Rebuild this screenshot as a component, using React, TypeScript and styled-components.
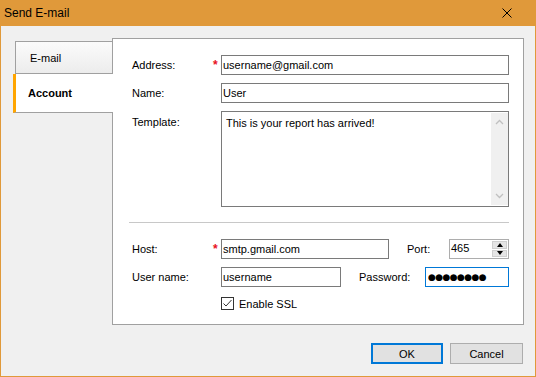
import React from "react";
import styled, { createGlobalStyle } from "styled-components";

const GlobalStyle = createGlobalStyle`
  html, body {
    margin: 0;
    padding: 0;
    background: #f0f0f0;
  }
  body {
    font-family: "Liberation Sans", Arial, sans-serif;
    font-size: 11px;
    color: #000;
  }
  * {
    box-sizing: border-box;
  }
`;

const Window = styled.div`
  width: 536px;
  height: 377px;
  display: flex;
  flex-direction: column;
  background: #f0f0f0;
  border: 1px solid #e0993a;
  border-top: none;
`;

const TitleBar = styled.div`
  height: 26px;
  flex: none;
  background: #e0993a;
  display: flex;
  align-items: center;
  justify-content: space-between;
  padding: 0 23px 0 3px;
  font-size: 12px;
`;

const Main = styled.div`
  display: flex;
  align-items: flex-start;
  padding: 12px 11px 0 12px;
`;

const TabColumn = styled.div`
  width: 100px;
  flex: none;
  margin-top: 3px;
  margin-right: -1px;
  position: relative;
  z-index: 1;
  display: flex;
  flex-direction: column;
`;

const Tab = styled.div<{ $active?: boolean }>`
  display: flex;
  align-items: center;
  ${(p) =>
    p.$active
      ? `
    height: 39px;
    background: #fff;
    border-left: 3px solid #ffa500;
    border-bottom: 1px solid #a0a0a0;
    padding-left: 12px;
    font-weight: bold;
  `
      : `
    height: 33px;
    margin: 0 1px 0 2px;
    background: linear-gradient(#fbfbfb, #ececec);
    border: 1px solid #a0a0a0;
    border-right: none;
    padding-left: 14px;
  `}
`;

const Panel = styled.div`
  flex: 1;
  height: 287px;
  background: #fff;
  border: 1px solid #a0a0a0;
  padding: 16px 14px 0 19px;
`;

const FieldGrid = styled.div`
  display: grid;
  grid-template-columns: 81px 8px 1fr;
  row-gap: 8px;
  align-items: center;
`;

const Label = styled.div<{ $top?: boolean; $w?: number; $ml?: number }>`
  line-height: 13px;
  white-space: nowrap;
  ${(p) => (p.$top ? "align-self: start; margin-top: 5px;" : "")}
  ${(p) => (p.$w ? `width: ${p.$w}px; flex: none;` : "")}
  ${(p) => (p.$ml ? `margin-left: ${p.$ml}px;` : "")}
`;

const Required = styled.span<{ $w?: number }>`
  color: #e81123;
  font-size: 12px;
  font-weight: bold;
  line-height: 13px;
  margin-top: 1px;
  ${(p) => (p.$w ? `width: ${p.$w}px; flex: none;` : "")}
`;

const Spacer = styled.span<{ $w: number }>`
  width: ${(p) => p.$w}px;
  flex: none;
`;

const TextInput = styled.input<{ $w?: number; $focus?: boolean }>`
  height: 20px;
  width: ${(p) => (p.$w ? `${p.$w}px` : "100%")};
  flex: none;
  border: 1px solid ${(p) => (p.$focus ? "#0078d7" : "#7a7a7a")};
  padding: 0 1px;
  margin: 0;
  font-family: "Liberation Sans", Arial, sans-serif;
  font-size: 11px;
  color: #000;
  background: #fff;
  outline: none;
`;

const DotsInput = styled(TextInput)`
  font-family: "DejaVu Sans", sans-serif;
  font-size: 9px;
  letter-spacing: -0.6px;
  padding-left: 2px;
`;

const TemplateBox = styled.div`
  height: 96px;
  border: 1px solid #7a7a7a;
  display: flex;
  background: #fff;
`;

const TemplateText = styled.textarea`
  flex: 1;
  border: none;
  outline: none;
  resize: none;
  padding: 5px 4px;
  font-family: "Liberation Sans", Arial, sans-serif;
  font-size: 11px;
  line-height: 13px;
  color: #000;
  overflow: hidden;
`;

const ScrollTrack = styled.div`
  width: 17px;
  margin: 1px 0;
  background: #f0f0f0;
  display: flex;
  flex-direction: column;
  justify-content: space-between;
  align-items: center;
  padding: 6px 0;
`;

const Separator = styled.div`
  height: 1px;
  background: #c8c8c8;
  margin: 15px 0 16px -3px;
`;

const Row = styled.div<{ $mb?: number }>`
  display: flex;
  align-items: center;
  height: 20px;
  margin-bottom: ${(p) => p.$mb ?? 0}px;
`;

const Spinner = styled.div`
  width: 60px;
  height: 20px;
  flex: none;
  display: flex;
  border: 1px solid #adadad;
  background: #fff;
`;

const SpinValue = styled.div`
  flex: 1;
  line-height: 16px;
  padding-left: 1px;
`;

const SpinButtons = styled.div`
  width: 16px;
  display: flex;
  flex-direction: column;
  padding: 1px 1px 1px 0;
  gap: 1px;
`;

const SpinButton = styled.div<{ $down?: boolean }>`
  flex: 1;
  background: #e5e5e5;
  border: 1px solid #cfcfcf;
  display: flex;
  align-items: center;
  justify-content: center;
  &::after {
    content: "";
    width: 0;
    height: 0;
    border-left: 3.5px solid transparent;
    border-right: 3.5px solid transparent;
    ${(p) =>
      p.$down ? "border-top: 4px solid #000;" : "border-bottom: 4px solid #000;"}
  }
`;

const CheckRow = styled.label`
  display: flex;
  align-items: center;
  margin-top: 10px;
  padding-left: 89px;
  gap: 5px;
`;

const CheckBox = styled.span`
  width: 13px;
  height: 13px;
  border: 1px solid #333;
  background: #fff;
  display: flex;
  align-items: center;
  justify-content: center;
`;

const Footer = styled.div`
  display: flex;
  justify-content: flex-end;
  padding: 18px 12px 0 0;
`;

const Button = styled.button<{ $primary?: boolean }>`
  height: 21px;
  width: ${(p) => (p.$primary ? 72 : 73)}px;
  margin-right: ${(p) => (p.$primary ? 7 : 0)}px;
  background: #e1e1e1;
  border: ${(p) => (p.$primary ? "2px solid #0078d7" : "1px solid #adadad")};
  font-family: "Liberation Sans", Arial, sans-serif;
  font-size: 11px;
  color: #000;
  padding: 0;
`;

const Chevron = ({ up }: { up?: boolean }) => (
  <svg width="9" height="6" viewBox="0 0 9 6">
    <path
      d={up ? "M1 5 L4.5 1.5 L8 5" : "M1 1 L4.5 4.5 L8 1"}
      fill="none"
      stroke="#c0c0c0"
      strokeWidth="1.3"
    />
  </svg>
);

export default function App() {
  return (
    <>
      <GlobalStyle />
      <Window>
        <TitleBar>
          <span>Send E-mail</span>
          <svg width="10" height="10" viewBox="0 0 10 10">
            <path d="M0.5 0.5 L9.5 9.5 M9.5 0.5 L0.5 9.5" stroke="#000" strokeWidth="1" />
          </svg>
        </TitleBar>

        <Main>
          <TabColumn>
            <Tab>E-mail</Tab>
            <Tab $active>Account</Tab>
          </TabColumn>

          <Panel>
            <FieldGrid>
              <Label>Address:</Label>
              <Required>*</Required>
              <TextInput readOnly defaultValue="username@gmail.com" />

              <Label>Name:</Label>
              <span />
              <TextInput readOnly defaultValue="User" />

              <Label $top>Template:</Label>
              <span />
              <TemplateBox>
                <TemplateText readOnly defaultValue="This is your report has arrived!" />
                <ScrollTrack>
                  <Chevron up />
                  <Chevron />
                </ScrollTrack>
              </TemplateBox>
            </FieldGrid>

            <Separator />

            <Row $mb={8}>
              <Label $w={81}>Host:</Label>
              <Required $w={8}>*</Required>
              <TextInput $w={168} readOnly defaultValue="smtp.gmail.com" />
              <Label $w={42} $ml={18}>Port:</Label>
              <Spinner>
                <SpinValue>465</SpinValue>
                <SpinButtons>
                  <SpinButton />
                  <SpinButton $down />
                </SpinButtons>
              </Spinner>
            </Row>

            <Row>
              <Label $w={81}>User name:</Label>
              <Spacer $w={8} />
              <TextInput $w={120} readOnly defaultValue="username" />
              <Label $w={66} $ml={18}>Password:</Label>
              <DotsInput $w={84} $focus readOnly defaultValue="●●●●●●●●" />
            </Row>

            <CheckRow>
              <CheckBox>
                <svg width="11" height="11" viewBox="0 0 11 11">
                  <path d="M1.5 5.5 L4 8 L9.5 2" fill="none" stroke="#333" strokeWidth="1" />
                </svg>
              </CheckBox>
              <span>Enable SSL</span>
            </CheckRow>
          </Panel>
        </Main>

        <Footer>
          <Button $primary>OK</Button>
          <Button>Cancel</Button>
        </Footer>
      </Window>
    </>
  );
}
